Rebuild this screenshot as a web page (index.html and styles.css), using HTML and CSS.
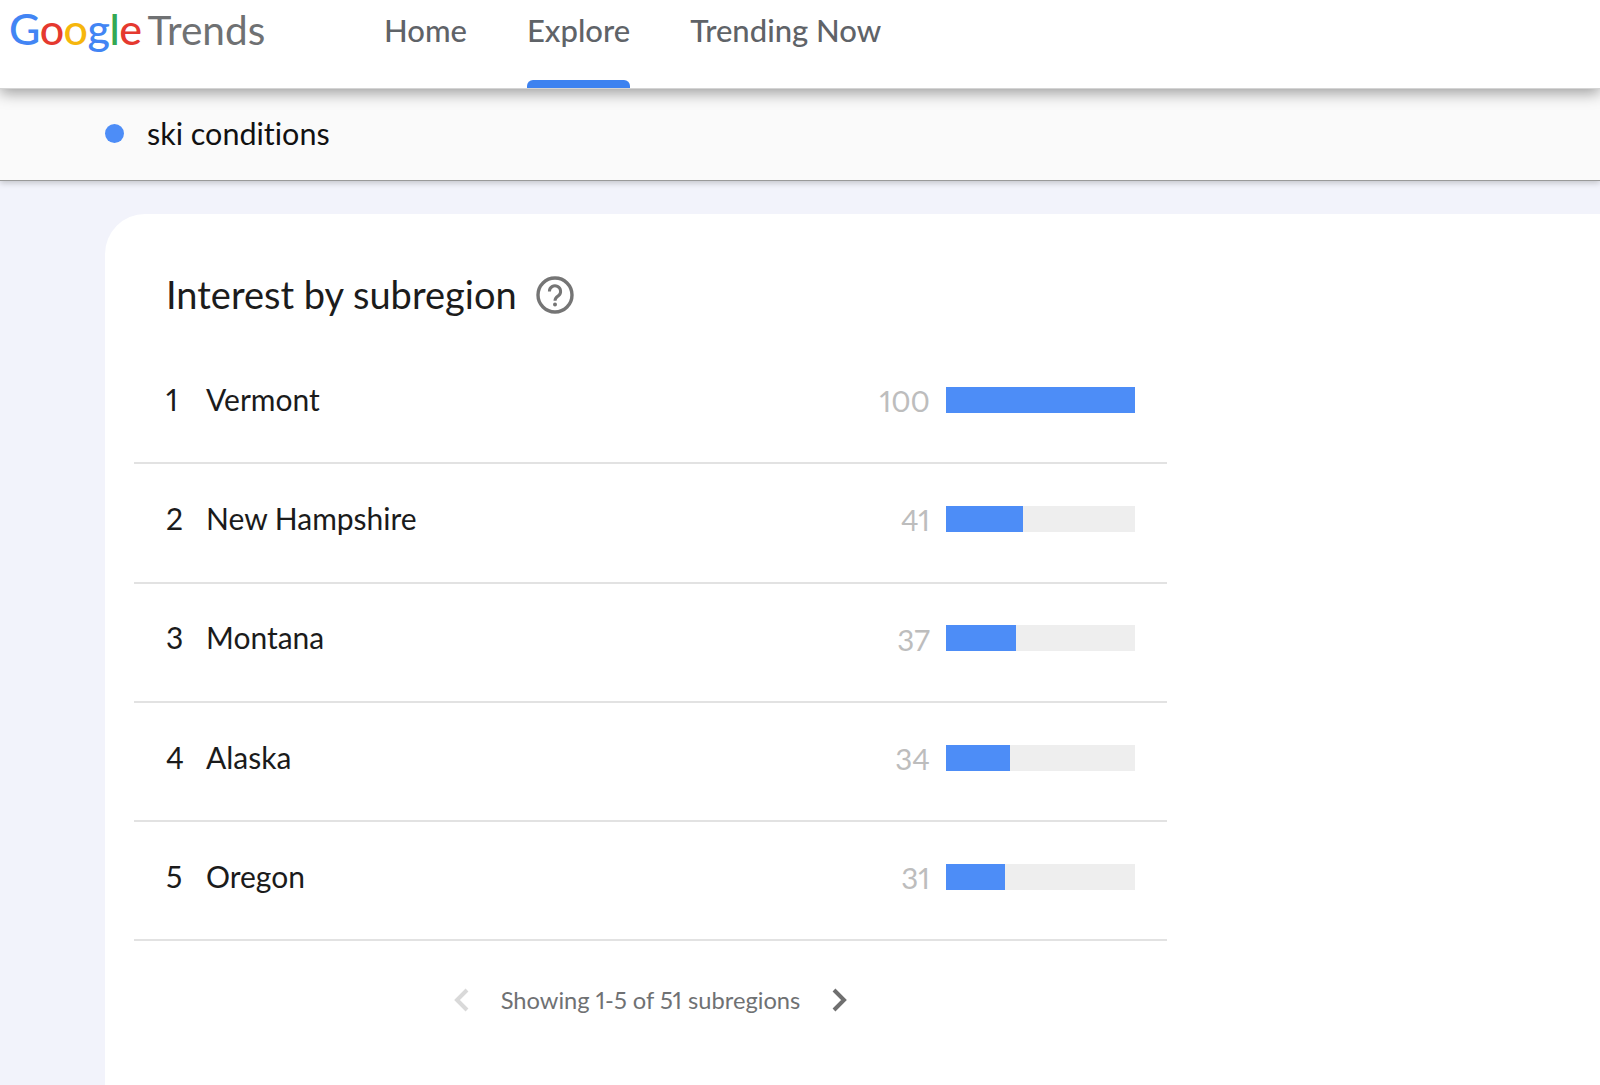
FILE: index.html
```html
<!DOCTYPE html>
<html lang="en">
<head>
<meta charset="utf-8">
<title>Google Trends</title>
<link rel="stylesheet" href="styles.css">
</head>
<body>
<header class="topbar">
  <div class="logo"><span class="logo-google"><span class="c-blue">G</span><span class="c-red">o</span><span class="c-yellow">o</span><span class="c-blue">g</span><span class="c-green">l</span><span class="c-red">e</span></span><span class="logo-trends">Trends</span></div>
  <nav class="nav">
    <a class="nav-item">Home</a>
    <a class="nav-item nav-active">Explore</a>
    <a class="nav-item">Trending Now</a>
  </nav>
</header>
<div class="termbar"><span class="dot"></span><span class="term">ski conditions</span></div>
<main class="content">
  <section class="card">
    <div class="card-head">
      <h2 class="card-title">Interest by subregion</h2>
      <svg class="help" viewBox="0 0 38 38" width="38" height="38" aria-hidden="true"><circle cx="19" cy="19" r="17" fill="none" stroke="#757575" stroke-width="3.4"/><path d="M13.4 15.4a5.6 5.6 0 1 1 9 4.4c-1.9 1.4-3.4 2.3-3.4 5" fill="none" stroke="#757575" stroke-width="3"/><circle cx="19" cy="28.6" r="2" fill="#757575"/></svg>
    </div>
    <ol class="rows">
      <li class="row"><span class="rank">1</span><span class="name">Vermont</span><span class="value">100</span><span class="bar"><span class="fill" style="width:100%"></span></span></li>
      <li class="row"><span class="rank">2</span><span class="name">New Hampshire</span><span class="value">41</span><span class="bar"><span class="fill" style="width:41%"></span></span></li>
      <li class="row"><span class="rank">3</span><span class="name">Montana</span><span class="value">37</span><span class="bar"><span class="fill" style="width:37%"></span></span></li>
      <li class="row"><span class="rank">4</span><span class="name">Alaska</span><span class="value">34</span><span class="bar"><span class="fill" style="width:34%"></span></span></li>
      <li class="row"><span class="rank">5</span><span class="name">Oregon</span><span class="value">31</span><span class="bar"><span class="fill" style="width:31%"></span></span></li>
    </ol>
    <div class="pager">
      <svg class="chev" viewBox="0 0 18 26" width="18" height="26" aria-hidden="true"><path d="M15 3 5 13l10 10" fill="none" stroke="#d9d9d9" stroke-width="4"/></svg>
      <span class="pager-text">Showing 1-5 of 51 subregions</span>
      <svg class="chev" viewBox="0 0 18 26" width="18" height="26" aria-hidden="true"><path d="M3 3l10 10L3 23" fill="none" stroke="#6f6f6f" stroke-width="4"/></svg>
    </div>
  </section>
</main>
</body>
</html>
```
FILE: styles.css
```css
* { box-sizing: border-box; }
html, body { margin: 0; height: 100%; }
body {
  height: 1085px;
  overflow: hidden;
  display: flex;
  flex-direction: column;
  background: #f2f3fb;
  font-family: Lato, Roboto, sans-serif;
  font-variant-ligatures: none;
  font-variant-numeric: proportional-nums;
  color: #1b1b1b;
}
.topbar {
  position: relative;
  z-index: 2;
  flex: 0 0 88px;
  display: flex;
  background: #fff;
  box-shadow: 0 1px 0 #d4d4d4, 0 5px 14px rgba(0,0,0,.38);
}
.logo {
  flex: 0 0 384px;
  padding: 2px 0 0 9px;
  display: flex;
  align-items: baseline;
  height: 60px;
  font-size: 43px;
  line-height: 54px;
}
.logo-google { font-weight: 500; margin-right: 6px; letter-spacing: -.5px; }
.logo-trends { color: #6f7173; font-size: 40.6px; }
.c-blue { color: #4285f4; }
.c-red { color: #e5392f; }
.c-yellow { color: #f6b60c; }
.c-green { color: #34a853; }
.nav { display: flex; gap: 60px; }
.nav-item {
  height: 88px;
  padding-top: 12px;
  font-size: 31px;
  line-height: 36px;
  color: #5f6368;
  font-weight: 500;
}
.nav-active { position: relative; }
.nav-active::after {
  content: "";
  position: absolute;
  left: 0; right: 0; bottom: 0;
  height: 8px;
  background: #3d82f0;
  border-radius: 6px 6px 0 0;
}
.termbar {
  position: relative;
  z-index: 1;
  flex: 0 0 93px;
  display: flex;
  align-items: center;
  gap: 23px;
  padding: 0 0 2px 105px;
  background: #fafafa;
  border-bottom: 1px solid #9a9a9a;
  box-shadow: 0 2px 6px rgba(0,0,0,.2);
}
.dot { width: 19px; height: 19px; border-radius: 50%; background: #4d8df7; }
.term { font-size: 30.5px; color: #111; }
.content { flex: 1; padding: 33px 0 0 105px; min-height: 0; }
.card {
  height: 100%;
  background: #fff;
  border-radius: 40px 0 0 0;
  padding: 0 0 0 29px;
  width: 100%;
}
.card-head {
  height: 131px;
  display: flex;
  align-items: center;
  gap: 19px;
  padding: 28px 0 0 32px;
}
.card-title { margin: 0; font-size: 38px; font-weight: 400; line-height: 44px; color: #1c1c1c; }
.help { margin-top: 3px; }
.rows { list-style: none; margin: 0; padding: 0; width: 1033px; }
.row {
  height: 119.3px;
  border-bottom: 2px solid #e2e2e2;
  display: flex;
  align-items: center;
  padding: 0 32px 8px 32px;
  font-size: 30px;
}
.rank { flex: 0 0 40px; padding-bottom: 2px; }
.name { flex: 1; padding-bottom: 2px; }
.value { color: #bdbdbd; margin-right: 16px; padding-top: 2px; font-size: 29.5px; }
.bar { flex: 0 0 189px; height: 26px; background: #eeeeee; display: flex; }
.fill { background: #4d8df7; }
.pager {
  width: 1033px;
  height: 120px;
  padding-bottom: 2px;
  display: flex;
  align-items: center;
  justify-content: center;
  gap: 31px;
  font-size: 23.7px;
  color: #6f7173;
}
```
